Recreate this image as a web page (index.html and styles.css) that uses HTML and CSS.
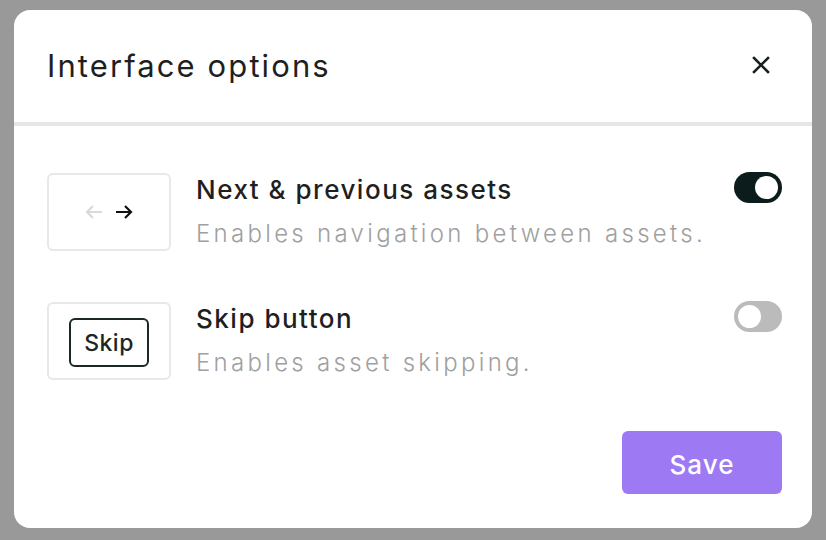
FILE: index.html
```html
<!DOCTYPE html>
<html>
<head>
<meta charset="utf-8">
<link rel="stylesheet" href="styles.css">
</head>
<body>
<div class="dialog">
  <div class="header">
    <h1 class="title">Interface options</h1>
    <button class="close" aria-label="Close">
      <svg width="18" height="18" viewBox="0 0 18 18"><path d="M2 2L16 16M16 2L2 16" stroke="#172222" stroke-width="2.6" stroke-linecap="square"/></svg>
    </button>
  </div>
  <div class="body">
    <div class="option">
      <div class="thumb">
        <div class="arrows">
          <svg width="18" height="14" viewBox="0 0 18 14"><path d="M17 7H2M8 1L2 7L8 13" fill="none" stroke="#d9d9d9" stroke-width="2.2"/></svg>
          <svg width="18" height="14" viewBox="0 0 18 14"><path d="M1 7H16M10 1L16 7L10 13" fill="none" stroke="#111" stroke-width="2.2"/></svg>
        </div>
      </div>
      <div class="text">
        <div class="opt-title">Next &amp; previous assets</div>
        <div class="opt-desc">Enables navigation between assets.</div>
      </div>
      <div class="toggle on"><span class="knob"></span></div>
    </div>
    <div class="option">
      <div class="thumb">
        <div class="skip">Skip</div>
      </div>
      <div class="text">
        <div class="opt-title">Skip button</div>
        <div class="opt-desc">Enables asset skipping.</div>
      </div>
      <div class="toggle"><span class="knob"></span></div>
    </div>
    <div class="footer">
      <button class="save">Save</button>
    </div>
  </div>
</div>
</body>
</html>
```
FILE: styles.css
```css
html, body {
  margin: 0;
  padding: 0;
}
body {
  background: #999999;
  width: 826px;
  height: 540px;
  padding: 10px 14px;
  box-sizing: border-box;
  font-family: Inter, "Noto Sans", sans-serif;
}
.dialog {
  width: 798px;
  height: 518px;
  background: #ffffff;
  border-radius: 16px;
  display: flex;
  flex-direction: column;
  overflow: hidden;
}
.header {
  height: 112px;
  border-bottom: 4px solid #e6e6e6;
  display: flex;
  align-items: center;
  justify-content: space-between;
  padding: 0 42px 0 33px;
  box-sizing: content-box;
}
.title {
  margin: 0;
  font-size: 31px;
  font-weight: 400;
  color: #1f1f1f;
  letter-spacing: 2.1px;
  margin-top: -1px;
}
.close {
  border: 0;
  background: none;
  padding: 0;
  width: 18px;
  height: 18px;
  display: flex;
  margin-top: -2px;
}
.body {
  padding: 47px 30px 33px 33px;
  display: flex;
  flex-direction: column;
  gap: 51px;
}
.option {
  display: flex;
  align-items: flex-start;
}
.thumb {
  width: 120px;
  height: 74px;
  border: 2px solid #e8e8e8;
  border-radius: 6px;
  display: flex;
  align-items: center;
  justify-content: center;
  flex-shrink: 0;
}
.arrows {
  display: flex;
  gap: 12px;
}
.skip {
  width: 76px;
  height: 45px;
  border: 2px solid #1b2828;
  border-radius: 6px;
  display: flex;
  align-items: center;
  justify-content: center;
  font-size: 23px;
  font-weight: 500;
  color: #1b2626;
  letter-spacing: 0.5px;
  margin-top: 3px;
}
.text {
  flex: 1;
  margin-left: 25px;
  margin-top: 0;
}
.opt-title {
  font-size: 26px;
  line-height: 34px;
  font-weight: 500;
  color: #1f1f1f;
  letter-spacing: 1.5px;
}
.opt-desc {
  font-size: 24px;
  line-height: 30px;
  margin-top: 12px;
  font-weight: 300;
  color: #a0a0a0;
  letter-spacing: 3.3px;
}
.toggle {
  width: 48px;
  height: 31px;
  border-radius: 16px;
  background: #bbbbbb;
  position: relative;
  flex-shrink: 0;
  margin-top: -1px;
}
.toggle .knob {
  position: absolute;
  top: 4px;
  left: 4px;
  width: 23px;
  height: 23px;
  border-radius: 50%;
  background: #ffffff;
}
.toggle.on {
  background: #0c1b1b;
}
.toggle.on .knob {
  left: auto;
  right: 4px;
}
.footer {
  display: flex;
  justify-content: flex-end;
}
.save {
  width: 160px;
  height: 63px;
  border: 0;
  border-radius: 6px;
  background: #9d7af3;
  color: #ffffff;
  font-family: Inter, "Noto Sans", sans-serif;
  font-size: 26px;
  font-weight: 500;
  letter-spacing: 1px;
  padding: 0;
  padding-top: 3px;
}
```
